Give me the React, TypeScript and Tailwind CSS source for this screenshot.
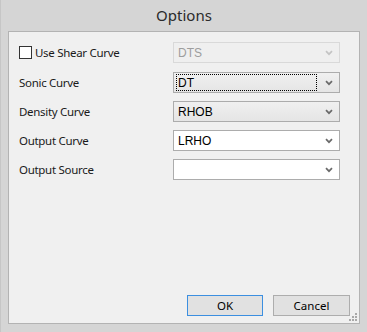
import React from "react";

function Chevron({ disabled }: { disabled?: boolean }) {
  return (
    <svg width="8" height="6" viewBox="0 0 8 6" className="shrink-0">
      <path
        d="M1 1.2 L4 4.2 L7 1.2"
        fill="none"
        stroke={disabled ? "#c4c4c4" : "#6a6a6a"}
        strokeWidth="1.7"
      />
    </svg>
  );
}

function Combo({
  value,
  kind,
  focused,
}: {
  value: string;
  kind: "disabled" | "button" | "edit";
  focused?: boolean;
}) {
  const base =
    "w-[167px] h-[21px] flex items-center pl-[2px] pr-[6px] border text-[12px] leading-none";
  const style =
    kind === "disabled"
      ? "border-[#d9d9d9] bg-[#efefef] text-[#9d9d9d]"
      : kind === "button"
      ? "border-[#acacac] bg-gradient-to-b from-[#f0f0f0] to-[#e5e5e5] text-black"
      : "border-[#acacac] bg-white text-black";
  return (
    <div className={`${base} ${style}`} style={{ fontFamily: '"Liberation Sans", Arial, sans-serif' }}>
      <div
        className={`flex-1 h-[17px] flex items-center pl-[2px] mr-[8px] ${
          focused ? "outline outline-1 outline-dotted outline-black -outline-offset-1" : ""
        }`}
      >
        {value}
      </div>
      <Chevron disabled={kind === "disabled"} />
    </div>
  );
}

function Row({ label, children }: { label: React.ReactNode; children: React.ReactNode }) {
  return (
    <div className="flex items-center h-[21px]">
      <div className="w-[154px] flex items-center">{label}</div>
      {children}
    </div>
  );
}

export default function App() {
  return (
    <div
      className="w-[367px] h-[332px] bg-[#d5d5d5] border-l border-[#c6c6c6] flex flex-col text-[#1a1a1a]"
      style={{ fontFamily: '"Noto Sans", "Open Sans", sans-serif' }}
    >
      <div className="h-[31px] flex items-center justify-center text-[15px] text-[#2b2b2b] pb-[1px]">
        Options
      </div>
      <div className="relative mx-[7px] mb-[8px] flex-1 border border-[#b3b3b3] bg-[#f0f0f0] flex flex-col pl-[10px] pr-[9px] pb-[7px] text-[11.5px]">
        <div className="mt-[10px] flex flex-col gap-[8px]">
          <Row
            label={
              <div className="flex items-center">
                <div className="w-[13px] h-[13px] border border-[#333333] bg-white mr-[3px]" />
                <span className="tracking-[-0.3px]">Use Shear Curve</span>
              </div>
            }
          >
            <Combo value="DTS" kind="disabled" />
          </Row>
          <div className="mt-[1px]">
            <Row label={<span className="tracking-[-0.3px]">Sonic Curve</span>}>
              <Combo value="DT" kind="button" focused />
            </Row>
          </div>
          <Row label={<span className="tracking-[-0.3px]">Density Curve</span>}>
            <Combo value="RHOB" kind="button" />
          </Row>
          <Row label={<span className="tracking-[-0.3px]">Output Curve</span>}>
            <Combo value="LRHO" kind="edit" />
          </Row>
          <Row label={<span className="tracking-[-0.3px]">Output Source</span>}>
            <Combo value="" kind="edit" />
          </Row>
        </div>
        <div className="flex-1" />
        <div className="flex justify-end gap-[10px]">
          <button className="w-[76px] h-[21px] border border-[#3c8fe0] bg-[#e1e1e1] text-[11.5px] text-black leading-none">
            OK
          </button>
          <button className="w-[77px] h-[21px] border border-[#adadad] bg-[#e1e1e1] text-[11.5px] text-black leading-none">
            Cancel
          </button>
        </div>
        <svg width="10" height="10" viewBox="0 0 10 10" className="absolute right-[1px] bottom-[1px]">
          <rect x="7" y="1" width="2" height="2" fill="#a8a8a8" />
          <rect x="4" y="4" width="2" height="2" fill="#a8a8a8" />
          <rect x="7" y="4" width="2" height="2" fill="#a8a8a8" />
          <rect x="1" y="7" width="2" height="2" fill="#a8a8a8" />
          <rect x="4" y="7" width="2" height="2" fill="#a8a8a8" />
          <rect x="7" y="7" width="2" height="2" fill="#a8a8a8" />
        </svg>
      </div>
    </div>
  );
}
